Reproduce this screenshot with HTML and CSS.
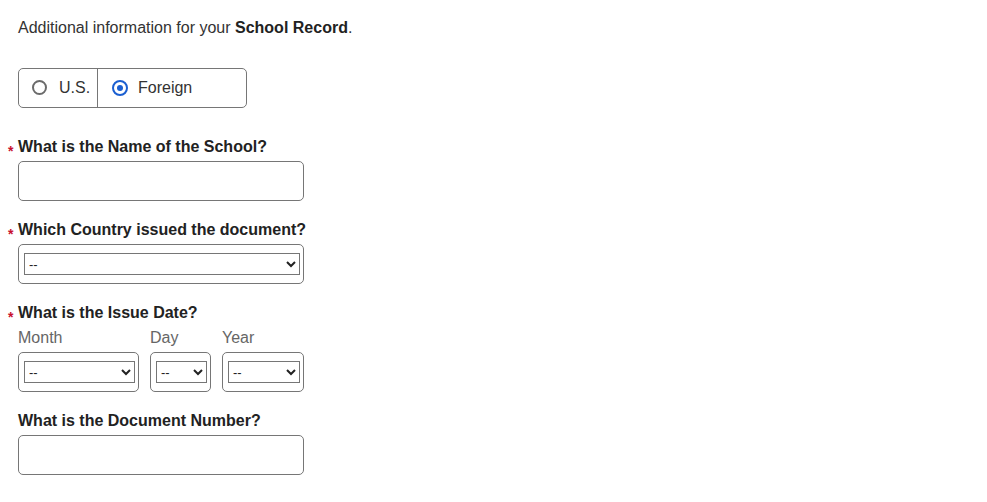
FILE: index.html
```html
<!DOCTYPE html>
<html lang="en">
<head>
<meta charset="utf-8">
<title>School Record</title>
<link rel="stylesheet" href="styles.css">
</head>
<body>
<div class="page">
  <p class="intro">Additional information for your <strong>School Record</strong>.</p>

  <div class="radio-group" role="radiogroup">
    <label class="radio-opt opt-us"><span class="radio"></span><span>U.S.</span></label>
    <label class="radio-opt opt-foreign"><span class="radio checked"></span><span>Foreign</span></label>
  </div>

  <div class="field">
    <div class="label"><span class="req">*</span>What is the Name of the School?</div>
    <div class="box"><input class="text-input" type="text"></div>
  </div>

  <div class="field">
    <div class="label"><span class="req">*</span>Which Country issued the document?</div>
    <div class="box select-box"><select class="sel"><option>--</option></select></div>
  </div>

  <div class="field">
    <div class="label"><span class="req">*</span>What is the Issue Date?</div>
    <div class="date-row">
      <div class="date-col col-month">
        <div class="sub">Month</div>
        <div class="box select-box"><select class="sel"><option>--</option></select></div>
      </div>
      <div class="date-col col-day">
        <div class="sub">Day</div>
        <div class="box select-box"><select class="sel"><option>--</option></select></div>
      </div>
      <div class="date-col col-year">
        <div class="sub">Year</div>
        <div class="box select-box"><select class="sel"><option>--</option></select></div>
      </div>
    </div>
  </div>

  <div class="field field-last">
    <div class="label">What is the Document Number?</div>
    <div class="box"><input class="text-input" type="text"></div>
  </div>
</div>
</body>
</html>
```

FILE: styles.css
```css
* { box-sizing: border-box; }
html, body { margin: 0; padding: 0; background: #fff; }
body {
  font-family: "Liberation Sans", Arial, sans-serif;
  font-size: 16px;
  color: #333;
}
.page {
  padding: 18px 18px 0 18px;
}
.intro {
  margin: 0;
  line-height: 20px;
  height: 20px;
}
.intro strong { color: #222; }

.radio-group {
  margin-top: 30px;
  width: 229px;
  height: 40px;
  border: 1px solid #767676;
  border-radius: 5px;
  display: flex;
}
.radio-opt {
  display: flex;
  align-items: center;
  color: #333;
  cursor: pointer;
  padding-bottom: 1px;
}
.opt-us {
  width: 79px;
  padding-left: 13px;
  gap: 12px;
  border-right: 1px solid #767676;
}
.opt-foreign {
  padding-left: 14px;
  gap: 10px;
}
.radio {
  width: 15px;
  height: 15px;
  border-radius: 50%;
  border: 2px solid #6b6b6b;
  flex: none;
  position: relative;
}
.radio.checked {
  width: 16px;
  height: 16px;
  border-color: #1b5fd1;
}
.radio.checked::after {
  content: "";
  position: absolute;
  left: 50%;
  top: 50%;
  width: 6px;
  height: 6px;
  margin: -3px 0 0 -3px;
  border-radius: 50%;
  background: #1b5fd1;
}

.field { margin-top: 28px; }
.field + .field { margin-top: 18px; }
.field + .field-last { margin-top: 18px; }
.label {
  font-weight: bold;
  color: #222;
  line-height: 20px;
  height: 21px;
  padding-top: 1px;
  margin-bottom: 4px;
}
.req {
  display: inline-block;
  width: 11px;
  margin-left: -11px;
  padding-left: 1px;
  color: #c8102e;
  font-size: 14px;
  font-weight: bold;
  vertical-align: -4px;
  line-height: 1;
}
.box {
  width: 286px;
  height: 40px;
  border: 1px solid #767676;
  border-radius: 5px;
}
.text-input {
  width: 100%;
  height: 100%;
  border: 0;
  background: transparent;
  outline: none;
  font: inherit;
  padding: 0 8px;
}
.select-box {
  padding: 8px 3px 8px 5px;
}
.sel {
  display: block;
  width: 100%;
  height: 22px;
  font-family: "Liberation Sans", Arial, sans-serif;
  font-size: 13px;
  color: #222;
  background: #fff;
  border: 1px solid #767676;
  border-radius: 0;
}
.date-row {
  display: flex;
  gap: 11px;
  margin-top: 4px;
}
.sub {
  color: #666;
  line-height: 20px;
  height: 21px;
  padding-top: 1px;
  margin-bottom: 4px;
}
.col-month .box { width: 121px; }
.col-day .box { width: 61px; }
.col-year .box { width: 82px; }
```
